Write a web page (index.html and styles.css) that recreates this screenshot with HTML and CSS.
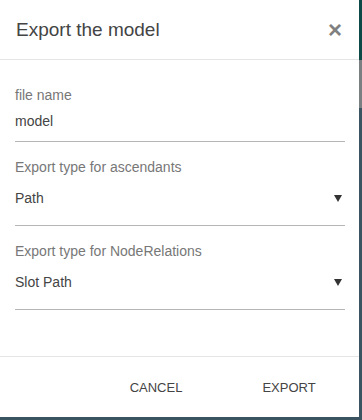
FILE: index.html
```html
<!DOCTYPE html>
<html lang="en">
<head>
  <meta charset="UTF-8" />
  <meta name="viewport" content="width=device-width, initial-scale=1.0" />
  <title>Export the model</title>
  <link rel="stylesheet" href="styles.css">
</head>
<body>
  <div class="modal">
    <div class="modal-header">
      <h2 class="modal-title">Export the model</h2>
      <button class="close" aria-label="Close">&times;</button>
    </div>

    <div class="modal-body">
      <div class="field">
        <label for="filename">file name</label>
        <input type="text" id="filename" value="model">
      </div>
      <div class="field select-field">
        <label>Export type for ascendants</label>
        <div class="select">
          <span>Path</span>
          <span class="caret"></span>
        </div>
      </div>
      <div class="field select-field">
        <label>Export type for NodeRelations</label>
        <div class="select">
          <span>Slot Path</span>
          <span class="caret"></span>
        </div>
      </div>
    </div>

    <div class="modal-footer">
      <button class="btn">CANCEL</button>
      <button class="btn">EXPORT</button>
    </div>
  </div>
</body>
</html>
```

FILE: styles.css
```css
body {
  margin: 0;
  height: 420px;
  font-family: "Liberation Sans", Arial, sans-serif;
  background: linear-gradient(to bottom, #0d4a47 0, #0d4a47 60px, #7a7f82 60px, #7a7f82 108px, #3b5462 108px);
  overflow: hidden;
}
.modal {
  width: 359px;
  height: 417px;
  background: #fff;
  display: flex;
  flex-direction: column;
}
.modal-header {
  height: 59px;
  border-bottom: 1px solid #e5e5e5;
  display: flex;
  align-items: center;
  justify-content: space-between;
  padding: 0 16px;
}
.modal-title {
  margin: 0;
  font-size: 19px;
  font-weight: normal;
  color: #444;
}
.close {
  border: none;
  background: none;
  padding: 0;
  margin-right: 1px;
  font-family: "Liberation Sans", Arial, sans-serif;
  font-size: 24px;
  font-weight: bold;
  line-height: 1;
  color: #808080;
  cursor: pointer;
}
.modal-body {
  flex: 1;
  padding: 25px 14px 0 15px;
  display: flex;
  flex-direction: column;
  gap: 15px;
}
.field {
  border-bottom: 1px solid #b5b5b5;
}
.field label {
  display: block;
  font-size: 14px;
  line-height: 20px;
  color: #777;
}
.field input {
  display: block;
  width: 100%;
  margin: 6px 0 0;
  padding: 0 0 10px;
  border: none;
  outline: none;
  font-family: inherit;
  font-size: 14px;
  line-height: 20px;
  color: #444;
  background: none;
}
.select {
  display: flex;
  justify-content: space-between;
  align-items: center;
  margin-top: 11px;
  padding-bottom: 17px;
  font-size: 14px;
  line-height: 20px;
  color: #444;
}
.caret {
  width: 0;
  height: 0;
  margin-right: 3px;
  border-left: 4px solid transparent;
  border-right: 4px solid transparent;
  border-top: 7px solid #333;
}
.modal-footer {
  height: 60px;
  border-top: 1px solid #e5e5e5;
  display: flex;
  align-items: center;
  justify-content: flex-end;
  padding-right: 26px;
  gap: 45px;
}
.btn {
  min-width: 88px;
  padding: 8px 16px;
  border: none;
  background: none;
  font-family: inherit;
  font-size: 13px;
  color: #444;
  cursor: pointer;
}
```
